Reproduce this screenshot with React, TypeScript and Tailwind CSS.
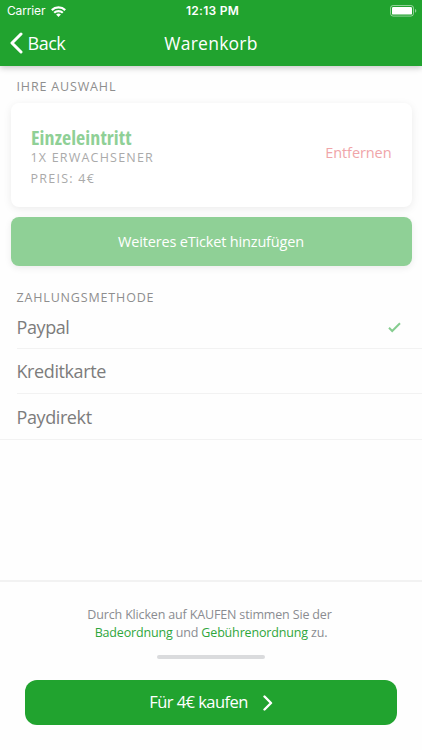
import React from "react";

function StatusBar() {
  return (
    <div className="flex h-[22px] items-center font-['Inter',sans-serif] leading-none">
      <div className="flex w-[140px] items-center gap-[6px] pl-[7px]">
        <span className="text-[12px] tracking-[-0.15px]">Carrier</span>
        <svg width="15" height="11" viewBox="0 0 15 11" fill="none" stroke="currentColor" strokeWidth="2.2">
          <path d="M.8 4.1a9.500 9.500 0 0 1 13.400 0" />
          <path d="M3.200 6.800a6.100 6.100 0 0 1 8.600 0" />
          <path d="M7.500 10.900 5.100 8.600a3.400 3.400 0 0 1 4.800 0z" fill="currentColor" stroke="none" />
        </svg>
      </div>
      <span className="flex-1 pl-[3px] text-center text-[12px] font-semibold tracking-[0.25px]">12:13 PM</span>
      <div className="flex w-[140px] justify-end pr-[5px]">
        <svg width="27" height="12" viewBox="0 0 27 12">
          <rect x=".5" y=".5" width="23" height="10.600" rx="2.600" fill="none" stroke="#fff" strokeOpacity=".5" />
          <rect x="2" y="2" width="20" height="7.600" rx="1.200" fill="#fff" />
          <path d="M25 4.100v3.500c.8-.3 1.300-1 1.300-1.700S25.800 4.400 25 4.100z" fill="#fff" fillOpacity=".5" />
        </svg>
      </div>
    </div>
  );
}

function Label({ children, className = "" }: { children: React.ReactNode; className?: string }) {
  return <div className={`whitespace-nowrap text-[12.500px] leading-[18px] tracking-[0.84px] text-[#8e8e8e] ${className}`}>{children}</div>;
}

const methods = ["Paypal", "Kreditkarte", "Paydirekt"];

export default function App() {
  return (
    <div className="flex h-[750px] w-[422px] flex-col overflow-hidden bg-[#fefefe] font-['Open_Sans',sans-serif]">
      <header className="h-[65.500px] shrink-0 bg-[#21a32f] text-white shadow-[0_2px_6px_rgba(0,0,0,0.22)]">
        <StatusBar />
        <div className="flex h-[42px] items-center">
          <div className="flex w-[140px] items-center gap-[4.500px] pl-[10px]">
            <svg width="13" height="22" viewBox="0 0 13 22" fill="none" stroke="currentColor" strokeWidth="3" strokeLinecap="round" strokeLinejoin="round">
              <path d="M11 2 2 11l9 9" />
            </svg>
            <span className="text-[18px] leading-6 tracking-[-0.5px]">Back</span>
          </div>
          <h1 className="flex-1 text-center text-[17.500px] font-medium leading-6 tracking-[0.250px]">Warenkorb</h1>
          <div className="w-[140px]" />
        </div>
      </header>

      <main className="min-h-0 flex-1">
        <Label className="pl-[16.500px] pt-[12px]">IHRE AUSWAHL</Label>
        <section className="mx-[10.500px] mt-[7.500px] flex h-[104px] items-center justify-between rounded-[8px] bg-white pl-5 pr-[20px] shadow-[0_2px_9px_rgba(0,0,0,0.08)]">
          <div className="pt-[3px]">
            <h2 className="pl-[0.500px] text-[20px] font-bold leading-[23px] tracking-[0.080px] text-[#8fd096] [font-stretch:75%]">Einzeleintritt</h2>
            <p className="text-[12.500px] leading-[18px] tracking-[1.200px] text-[#aaa]">1X ERWACHSENER</p>
            <p className="mt-[3px] text-[12.500px] leading-[18px] tracking-[1.250px] text-[#aaa]">PREIS: 4€</p>
          </div>
          <button className="pb-[5px] text-[14.500px] tracking-[-0.080px] text-[#f0a5a9]">Entfernen</button>
        </section>
        <button className="mx-[10.500px] mt-[10px] flex h-[49px] w-[401px] items-center justify-center rounded-[8px] bg-[#8fd096] text-[14.500px] tracking-[-0.170px] text-white shadow-[0_2px_7px_rgba(0,0,0,0.08)]">
          Weiteres eTicket hinzufügen
        </button>

        <Label className="pl-[16.500px] pt-[22.500px]">ZAHLUNGSMETHODE</Label>
        <ul className="border-b border-[#f2f2f2] text-[18px] tracking-[-0.400px] text-[#7c7c7c]">
          {methods.map((name, i) => (
            <li
              key={name}
              className={`ml-[16.500px] flex items-center justify-between pr-[21px] ${i === 0 ? "h-[42.500px]" : "h-[45px] pt-[1px]"} ${i < 2 ? "border-b border-[#f2f2f2]" : ""}`}
            >
              {name}
              {i === 0 && (
                <svg width="13" height="11" viewBox="0 0 13 11" fill="none" stroke="#86cd90" strokeWidth="2">
                  <path d="M1 5.800 4.200 9 12 1.200" />
                </svg>
              )}
            </li>
          ))}
        </ul>
      </main>

      <footer className="flex h-[170px] shrink-0 flex-col items-center border-t-2 border-[#f2f2f2]">
        <p className="mt-[24px] text-center text-[12.500px] leading-[17.500px] tracking-[-0.160px] text-[#8a8c91]">
          <span className="pr-[3px]">Durch Klicken auf KAUFEN stimmen Sie der</span>
          <br />
          <span className="font-medium text-[#2fa63c]">Badeordnung</span> und{" "}
          <span className="font-medium text-[#2fa63c]">Gebührenordnung</span> zu.
        </p>
        <div className="mt-[14px] h-[4px] w-[108px] rounded-full bg-[#dadbdd]" />
        <button className="mt-[21px] flex h-[45px] w-[372px] items-center justify-center gap-[15px] rounded-[12px] bg-[#21a32f] text-[16.500px] tracking-[-0.550px] text-white">
          Für 4€ kaufen
          <svg width="10" height="16" viewBox="0 0 10 16" fill="none" stroke="currentColor" strokeWidth="2.400" strokeLinecap="round" strokeLinejoin="round">
            <path d="m1.500 1.500 6.500 6.500-6.500 6.500" />
          </svg>
        </button>
      </footer>
    </div>
  );
}
